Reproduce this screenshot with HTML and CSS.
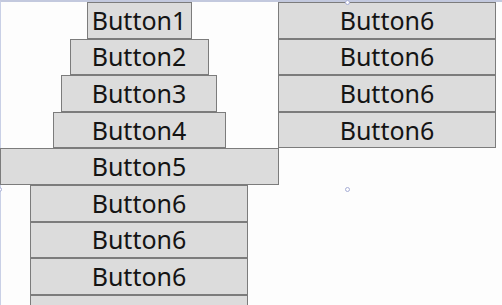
FILE: index.html
```html
<!DOCTYPE html>
<html>
<head>
<meta charset="utf-8">
<link rel="stylesheet" href="styles.css">
</head>
<body>
<div class="panel">
  <div class="column col-left">
    <button class="btn w1">Button1</button>
    <button class="btn w2">Button2</button>
    <button class="btn w3">Button3</button>
    <button class="btn w4">Button4</button>
    <button class="btn w5">Button5</button>
    <button class="btn w6">Button6</button>
    <button class="btn w6">Button6</button>
    <button class="btn w6">Button6</button>
    <button class="btn w6">Button6</button>
  </div>
  <div class="column col-right">
    <button class="btn w6">Button6</button>
    <button class="btn w6">Button6</button>
    <button class="btn w6">Button6</button>
    <button class="btn w6">Button6</button>
  </div>
  <span class="handle handle-top"></span>
  <span class="handle handle-mid"></span>
  <span class="handle handle-left"></span>
</div>
</body>
</html>
```

FILE: styles.css
```css
html, body {
  margin: 0;
  padding: 0;
  background: #fdfdfd;
  overflow: hidden;
}

.panel {
  position: relative;
  width: 502px;
  height: 305px;
  box-sizing: border-box;
  border-top: 2px solid #c3c9de;
  border-left: 1px solid #c9d0e6;
  display: flex;
  align-items: flex-start;
}

.column {
  display: flex;
  flex-direction: column;
  align-items: center;
}

.col-left {
  width: 278px;
  margin-left: -1px;
}

.col-right {
  width: 218px;
}

.btn {
  box-sizing: border-box;
  height: 36.6px;
  margin: 0;
  padding: 0;
  border: 1px solid #7c7c7c;
  background: #dcdcdc;
  color: #141414;
  font-family: "Noto Sans", "Open Sans", sans-serif;
  font-size: 25px;
  line-height: 1;
  flex-shrink: 0;
}

.w1 { width: 105px; }
.w2 { width: 139px; }
.w3 { width: 156px; }
.w4 { width: 173px; }
.w5 { width: 279px; }
.w6 { width: 218px; }

.handle {
  position: absolute;
  width: 5px;
  height: 5px;
  box-sizing: border-box;
  border: 1.5px solid #a7aed6;
  border-radius: 50%;
  background: #fdfdfd;
}

.handle-top { left: 344px; top: -2px; }
.handle-mid { left: 344px; top: 185px; }
.handle-left { left: -4px; top: 185px; }
```
